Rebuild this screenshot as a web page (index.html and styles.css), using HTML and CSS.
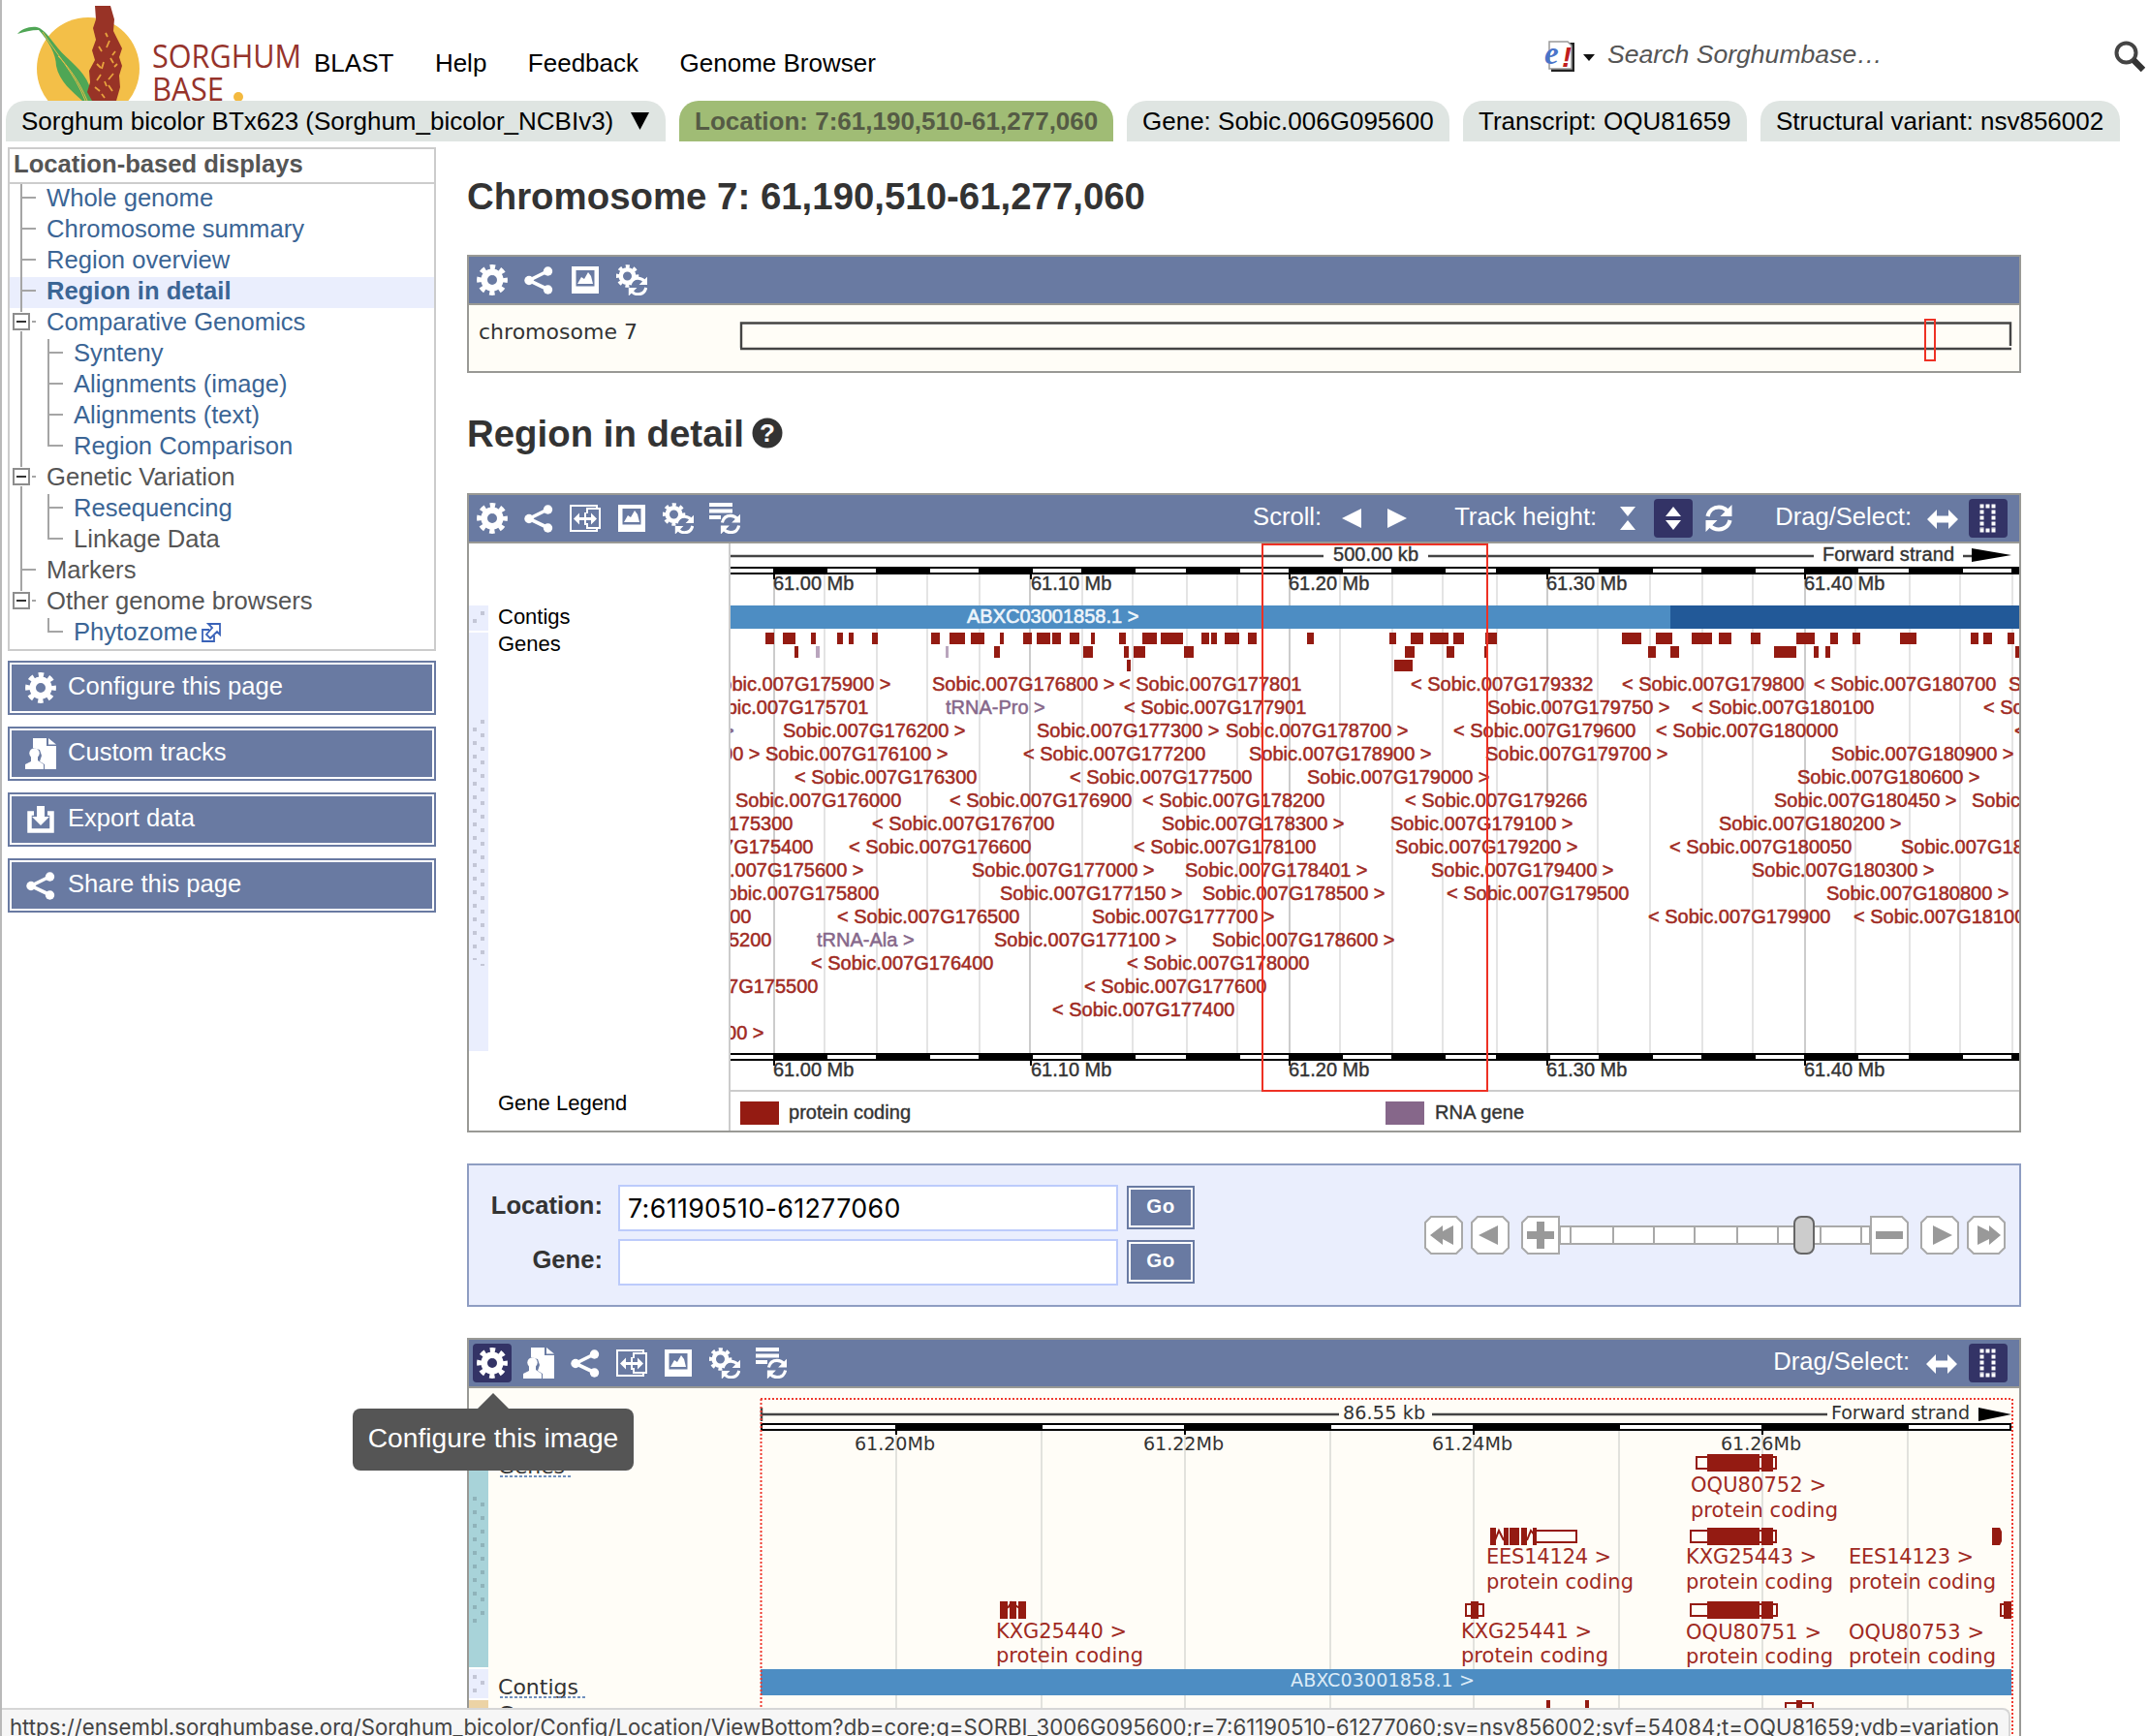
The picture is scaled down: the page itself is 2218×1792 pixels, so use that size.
FILE: index.html
```html
<!DOCTYPE html>
<html lang="en">
<head>
<meta charset="utf-8">
<title>Sorghumbase: Region in detail</title>
<link rel="stylesheet" href="styles.css">
</head>
<body>
<svg class="defs" width="0" height="0">
  <symbol id="gear" viewBox="0 0 32 32"><circle cx="16" cy="16" r="8.3" fill="none" stroke="#fff" stroke-width="6.6"/><circle cx="16" cy="16" r="13.4" fill="none" stroke="#fff" stroke-width="5" stroke-dasharray="5.4 5.125" stroke-dashoffset="2.7"/></symbol>
  <symbol id="share" viewBox="0 0 32 32"><path d="M25 7 6 16.500l19 9" fill="none" stroke="#fff" stroke-width="3.600"/><circle cx="25.500" cy="7" r="4.700" fill="#fff"/><circle cx="6" cy="16.500" r="4.700" fill="#fff"/><circle cx="25.500" cy="26" r="4.700" fill="#fff"/></symbol>
  <symbol id="resize" viewBox="0 0 32 32"><path d="M28 6V3H1v26h27v-3" fill="none" stroke="#fff" stroke-width="2"/><path d="M18 11V6h13v20H18v-5" fill="none" stroke="#fff" stroke-width="2"/><path d="M4 16.500 10 10.500v4.500h12v-4.500l6 6-6 6V18H10v4.500z" fill="#fff"/><path d="M16 10v13" stroke="#fff" stroke-width="2"/></symbol>
  <symbol id="image" viewBox="0 0 32 32"><path d="M2 2h28v28H2zM6.500 6v16.500h19V6z" fill="#fff" fill-rule="evenodd"/><path d="M8 20l4-7 3 2 4-7 3 4 2 8z" fill="#fff"/></symbol>
  <symbol id="cycle" viewBox="0 0 32 32"><path d="M4.500 14C6 7.500 11 4.500 16 4.500c4 0 7 1.500 9.500 4.500M27.500 18C26 24.500 21 27.500 16 27.500c-4 0-7-1.500-9.500-4.500" fill="none" stroke="#fff" stroke-width="4.200"/><path d="M29.500 2v12h-12zM2.500 30V18h12z" fill="#fff"/></symbol>
  <symbol id="gearcycle" viewBox="0 0 32 32"><circle cx="11.500" cy="12" r="6.800" fill="none" stroke="#fff" stroke-width="4.600"/><circle cx="11.500" cy="12" r="10" fill="none" stroke="#fff" stroke-width="3.600" stroke-dasharray="4 3.850" stroke-dashoffset="2"/><circle cx="23" cy="23" r="8" fill="#697aa2"/><use href="#cycle" x="11" y="11" width="23" height="23"/></symbol>
  <symbol id="listcycle" viewBox="0 0 32 32"><path d="M0 2h24M0 8.500h24M0 15h12" stroke="#fff" stroke-width="3.800"/><use href="#cycle" x="10" y="10" width="24" height="24"/></symbol>
  <symbol id="custom" viewBox="0 0 32 32"><path d="M8 0h14v8h10v24H20v-5l-5-3 2-6-2-6-7-2z" fill="#fff"/><path d="M24 0l8 6.500h-8z" fill="#fff"/><circle cx="9.500" cy="15.500" r="5.200" fill="#fff"/><path d="M6 18h7v5l6 4v5H0v-5l6-3z" fill="#fff"/></symbol>
  <symbol id="export" viewBox="0 0 32 32"><path d="M9 9.500H4.500v18h23v-18H23" fill="none" stroke="#fff" stroke-width="4.500"/><path d="M12 2h8v11h5l-9 9-9-9h5z" fill="#fff"/></symbol>
  <symbol id="drag" viewBox="0 0 32 32"><path d="M0 17l10-10v6.500h12V7l10 10-10 10v-6.500H10V27z" fill="#fff"/></symbol>
  <symbol id="select" viewBox="0 0 32 32"><path d="M7.500 3.500h18" stroke="#fff" stroke-width="4" stroke-dasharray="4 2"/><path d="M7.500 28.500h18" stroke="#fff" stroke-width="4" stroke-dasharray="4 2"/><path d="M9.500 7.500v19M21.500 7.500v19" stroke="#fff" stroke-width="4" stroke-dasharray="4 2"/></symbol>
  <symbol id="t-mid" viewBox="0 0 37 32"><path d="M12 0v32M12 14h15" fill="none" stroke="#a5a5a5" stroke-width="2"/></symbol>
  <symbol id="t-box" viewBox="0 0 37 32"><path d="M12 0v4M12 24v8M23 14h4" stroke="#a5a5a5" stroke-width="2"/><path d="M4 6h16v16H4z" fill="#fff" stroke="#8d8d8d" stroke-width="2"/><path d="M7 14h10" stroke="#333" stroke-width="2"/></symbol>
  <symbol id="t-boxend" viewBox="0 0 37 32"><path d="M12 0v4M23 14h4" stroke="#a5a5a5" stroke-width="2"/><path d="M4 6h16v16H4z" fill="#fff" stroke="#8d8d8d" stroke-width="2"/><path d="M7 14h10" stroke="#333" stroke-width="2"/></symbol>
  <symbol id="c-mid" viewBox="0 0 65 32"><path d="M12 0v32M40 0v32M40 14h15" fill="none" stroke="#a5a5a5" stroke-width="2"/></symbol>
  <symbol id="c-end" viewBox="0 0 65 32"><path d="M12 0v32M40 0v14h15" fill="none" stroke="#a5a5a5" stroke-width="2"/></symbol>
  <symbol id="c-last" viewBox="0 0 65 32"><path d="M40 0v14h15" fill="none" stroke="#a5a5a5" stroke-width="2"/></symbol>
</svg>

<div class="page">
  <header class="masthead">
    <svg class="logo" width="324" height="104" viewBox="0 0 324 104">
      <circle cx="91" cy="71" r="53" fill="#f3bf48"/>
      <path d="M18 35c4-5 12-8 20-7 8 2 14 12 22 22 10 12 26 22 32 38l6 16H85C75 95 61 84 58 68c0-12-8-26-18-37-8 0-15 2-22 4z" fill="#4fa655"/>
      <path d="M44 33c12 20 34 44 44 71M60 58c10 10 22 26 30 46" stroke="#e3bd49" stroke-width="1" fill="none"/>
      <path d="M98 6h16l4 14-1 12 5 10 4 8-3 9 3 9-3 10 1 12-4 14H95l-5-9 3-10-1-12 6-11-3-10 4-11-3-12 3-9z" fill="#983326"/>
      <path d="M102 48l3 5M113 42l-3 7M100 66l4 4M114 60l3 5M104 77l-4 6M117 76l-5 6M98 90l5 4M112 88l4 6M107 64l-2 7M119 53l-3 4M105 97l3 4M109 34l2 4M108 84l2 5M121 66l-3 3" stroke="#e8a33d" stroke-width="1.800"/>
      <text class="brand" x="157" y="70" textLength="154" lengthAdjust="spacingAndGlyphs">SORGHUM</text>
      <text class="brand" x="157" y="104" textLength="74" lengthAdjust="spacingAndGlyphs">BASE</text>
      <circle cx="246" cy="100" r="5" fill="#f3b93f"/>
    </svg>
    <nav class="nav"><a>BLAST</a><a>Help</a><a>Feedback</a><a>Genome Browser</a></nav>
    <div class="search">
      <svg width="54" height="32" viewBox="0 0 54 32"><path d="M8 2h24v30H8z" fill="#222"/><path d="M6 1h19l4 4v24H6z" fill="#fff" stroke="#999" stroke-width="1.500"/><text x="1" y="24" class="e-mark">e</text><text x="19" y="27" class="e-bang">!</text><path d="M41 14h12l-6 7z" fill="#111"/></svg>
      <span class="placeholder">Search Sorghumbase…</span>
      <svg width="32" height="32" viewBox="0 0 32 32"><circle cx="12.500" cy="12.500" r="10" fill="none" stroke="#444" stroke-width="4"/><path d="M20 20l10 10" stroke="#333" stroke-width="6.500"/></svg>
    </div>
  </header>

  <div class="tabs">
    <div class="tab species">Sorghum bicolor BTx623 (Sorghum_bicolor_NCBIv3)<svg width="20" height="20" viewBox="0 0 20 20"><path d="M0 1h19L9.500 19z"/></svg></div>
    <div class="tab location active">Location: 7:61,190,510-61,277,060</div>
    <div class="tab gene">Gene: Sobic.006G095600</div>
    <div class="tab transcript">Transcript: OQU81659</div>
    <div class="tab variant">Structural variant: nsv856002</div>
  </div>

  <div class="columns">
    <aside class="sidebar">
      <div class="menu">
        <div class="menu-title">Location-based displays</div>
        <div class="row"><svg class="l1"><use href="#t-mid"/></svg><a>Whole genome</a></div>
        <div class="row"><svg class="l1"><use href="#t-mid"/></svg><a>Chromosome summary</a></div>
        <div class="row"><svg class="l1"><use href="#t-mid"/></svg><a>Region overview</a></div>
        <div class="row current"><svg class="l1"><use href="#t-mid"/></svg><a>Region in detail</a></div>
        <div class="row"><svg class="l1"><use href="#t-box"/></svg><a>Comparative Genomics</a></div>
        <div class="row"><svg class="l2"><use href="#c-mid"/></svg><a>Synteny</a></div>
        <div class="row"><svg class="l2"><use href="#c-mid"/></svg><a>Alignments (image)</a></div>
        <div class="row"><svg class="l2"><use href="#c-mid"/></svg><a>Alignments (text)</a></div>
        <div class="row"><svg class="l2"><use href="#c-end"/></svg><a>Region Comparison</a></div>
        <div class="row"><svg class="l1"><use href="#t-box"/></svg><span>Genetic Variation</span></div>
        <div class="row"><svg class="l2"><use href="#c-mid"/></svg><a>Resequencing</a></div>
        <div class="row"><svg class="l2"><use href="#c-end"/></svg><span>Linkage Data</span></div>
        <div class="row"><svg class="l1"><use href="#t-mid"/></svg><span>Markers</span></div>
        <div class="row"><svg class="l1"><use href="#t-boxend"/></svg><span>Other genome browsers</span></div>
        <div class="row"><svg class="l2"><use href="#c-last"/></svg><a>Phytozome</a><svg class="ext" width="20" height="20" viewBox="0 0 20 20"><path d="M8 7H1v12h12v-6M7 1h12v11l-3-3-7 7-4-4 6-7z" fill="none" stroke="#3a62b8" stroke-width="1.800"/></svg></div>
      </div>
      <div class="tool"><svg><use href="#gear"/></svg>Configure this page</div>
      <div class="tool"><svg><use href="#custom"/></svg>Custom tracks</div>
      <div class="tool"><svg><use href="#export"/></svg>Export data</div>
      <div class="tool"><svg><use href="#share"/></svg>Share this page</div>
    </aside>

    <main class="main">
      <h1>Chromosome 7: 61,190,510-61,277,060</h1>
      <section class="panel">
        <div class="toolbar"><i><svg><use href="#gear"/></svg></i><i><svg><use href="#share"/></svg></i><i><svg><use href="#image"/></svg></i><i><svg><use href="#gearcycle"/></svg></i></div>
        <svg class="plot cream" width="1600" height="68" viewBox="484 315 1600 68">
          <text class="dv" x="494" y="350" textLength="164">chromosome 7</text>
          <path d="M765 359V333.500H2075V357M764 360h1312" fill="none" stroke="#444" stroke-width="2.400"/>
          <path d="M1987 330h10v42h-10z" fill="none" stroke="#ee3124" stroke-width="2"/>
        </svg>
      </section>

      <h2>Region in detail <svg width="32" height="32" viewBox="0 0 32 32"><circle cx="16" cy="16" r="15.500" fill="#333"/><text x="16" y="25" text-anchor="middle">?</text></svg></h2>
      <section class="panel">
        <div class="toolbar"><i><svg><use href="#gear"/></svg></i><i><svg><use href="#share"/></svg></i><i><svg><use href="#resize"/></svg></i><i><svg><use href="#image"/></svg></i><i><svg><use href="#gearcycle"/></svg></i><i><svg><use href="#listcycle"/></svg></i>
          <div class="controls">
            <span class="lbl">Scroll:</span>
            <svg class="scroll-icons" width="68" height="32" viewBox="0 0 68 32"><path d="M20 6v20L0 16zM47 6v20l20-10z" fill="#fff"/></svg>
            <span class="lbl height">Track height:</span>
            <i><svg viewBox="0 0 32 32"><path d="M8 4h16L16 14zM8 28h16L16 18z" fill="#fff"/></svg></i>
            <i class="on"><svg viewBox="0 0 32 32"><path d="M8 14h16L16 4zM8 18h16L16 28z" fill="#fff"/></svg></i>
            <i><svg><use href="#cycle"/></svg></i>
            <span class="lbl drag">Drag/Select:</span>
            <i><svg><use href="#drag"/></svg></i>
            <i class="on"><svg><use href="#select"/></svg></i>
          </div>
        </div>
        <svg class="plot" width="1600" height="606" viewBox="484 561 1600 606">
          <path d="M484 625h20v26h-20zM484 653h20v432h-20z" fill="#eaeefd"/>
          <path d="M496 633h4M488 641h4" stroke="#c3c6d6" stroke-width="4"/>
          <path d="M498 743v254" stroke="#c3c6d6" stroke-width="4" stroke-dasharray="4 10"/>
          <path d="M490 751v240" stroke="#c3c6d6" stroke-width="4" stroke-dasharray="4 10"/>
          <g class="side"><text x="514" y="644">Contigs</text><text x="514" y="672">Genes</text><text x="514" y="1146">Gene Legend</text></g>
          <path d="M753 561v606" stroke="#ccc" stroke-width="2"/>
          <svg x="754" y="561" width="1330" height="606" viewBox="754 561 1330 606">
            <path d="M851 593v494M905 593v494M957 593v494M1011 593v494M1117 593v494M1169 593v494M1225 593v494M1277 593v494M1383 593v494M1437 593v494M1489 593v494M1545 593v494M1649 593v494M1703 593v494M1757 593v494M1809 593v494M1915 593v494M1971 593v494M2023 593v494M2077 593v494" stroke="#e4e4e4" stroke-width="2"/>
            <path d="M799 593v494M1063 593v494M1331 593v494M1597 593v494M1863 593v494" stroke="#ccc" stroke-width="2"/>
            <path d="M754 574h612M1474 574h398M2026 574h10" stroke="#444" stroke-width="2.400"/>
            <path d="M2035 566l41 7-41 7z"/>
            <g id="scale">
              <path d="M754 585h1330v8H754z"/>
              <path d="M754 589h44M854 589h50M960 589h50M1066 589h50M1172 589h52M1280 589h50M1386 589h50M1492 589h52M1600 589h50M1706 589h50M1812 589h50M1918 589h52M2026 589h50" stroke="#fff" stroke-width="4"/>
              <path d="M799 593v5M1064 593v5M1331 593v5M1597 593v5M1863 593v5" stroke="#000" stroke-width="2"/>
              <g class="ax"><text x="798" y="608.500">61.00 Mb</text><text x="1064" y="608.500">61.10 Mb</text><text x="1330" y="608.500">61.20 Mb</text><text x="1596" y="608.500">61.30 Mb</text><text x="1862" y="608.500">61.40 Mb</text></g>
            </g>
            <use href="#scale" y="502"/>
            <g class="ax"><text x="1376" y="579" textLength="88">500.00 kb</text><text x="1881" y="579" textLength="136">Forward strand</text></g>
            <path d="M754 625h970v24H754z" fill="#4d8dc3"/><path d="M1724 625h360v24h-360z" fill="#225998"/>
            <text class="contig" x="998" y="643">ABXC03001858.1 &gt;</text>
            <path fill="#941b12" d="M790 653h9v12h-9zM808 653h13v12h-13zM837 653h5v12h-5zM864 653h6v12h-6zM876 653h5v12h-5zM900 653h6v12h-6zM961 653h9v12h-9zM980 653h16v12h-16zM1002 653h14v12h-14zM1032 653h4v12h-4zM1056 653h9v12h-9zM1070 653h14v12h-14zM1086 653h9v12h-9zM1104 653h10v12h-10zM1126 653h4v12h-4zM1155 653h7v12h-7zM1179 653h15v12h-15zM1198 653h23v12h-23zM1240 653h8v12h-8zM1250 653h6v12h-6zM1264 653h15v12h-15zM1288 653h9v12h-9zM1349 653h7v12h-7zM1434 653h7v12h-7zM1456 653h13v12h-13zM1476 653h19v12h-19zM1500 653h11v12h-11zM1533 653h12v12h-12zM1674 653h20v12h-20zM1709 653h17v12h-17zM1746 653h21v12h-21zM1774 653h13v12h-13zM1807 653h10v12h-10zM1854 653h19v12h-19zM1889 653h8v12h-8zM1912 653h8v12h-8zM1961 653h17v12h-17zM2034 653h8v12h-8zM2047 653h9v12h-9zM2072 653h7v12h-7zM820 667h4v12h-4zM1026 667h6v12h-6zM1118 667h10v12h-10zM1160 667h5v12h-5zM1170 667h12v12h-12zM1222 667h10v12h-10zM1450 667h10v12h-10zM1493 667h8v12h-8zM1532 667h4v12h-4zM1701 667h8v12h-8zM1724 667h9v12h-9zM1831 667h23v12h-23zM1872 667h5v12h-5zM1884 667h5v12h-5zM2080 667h4v12h-4zM1163 681h4v12h-4zM1439 681h19v12h-19z"/>
            <path fill="#b9a5bd" d="M842 667h4v12h-4zM976 667h3v12h-3z"/>
            <g class="genes">
              <text x="731" y="713">Sobic.007G175900 &gt;</text><text x="962" y="713">Sobic.007G176800 &gt;</text><text x="1155" y="713">&lt; Sobic.007G177801</text><text x="1456" y="713">&lt; Sobic.007G179332</text><text x="1674" y="713">&lt; Sobic.007G179800</text><text x="1872" y="713">&lt; Sobic.007G180700</text><text x="2073" y="713">Sobic.007G181300 &gt;</text>
              <text x="708" y="737">&lt; Sobic.007G175701</text><text class="rna" x="976" y="737">tRNA-Pro &gt;</text><text x="1160" y="737">&lt; Sobic.007G177901</text><text x="1535" y="737">Sobic.007G179750 &gt;</text><text x="1746" y="737">&lt; Sobic.007G180100</text><text x="2047" y="737">&lt; Sobic.007G181201</text>
              <text class="rna" x="746" y="761">&gt;</text><text x="808" y="761">Sobic.007G176200 &gt;</text><text x="1070" y="761">Sobic.007G177300 &gt;</text><text x="1265" y="761">Sobic.007G178700 &gt;</text><text x="1500" y="761">&lt; Sobic.007G179600</text><text x="1709" y="761">&lt; Sobic.007G180000</text><text x="2079" y="761">&lt;</text>
              <text x="596" y="785">Sobic.007G175100 &gt;</text><text x="790" y="785">Sobic.007G176100 &gt;</text><text x="1056" y="785">&lt; Sobic.007G177200</text><text x="1289" y="785">Sobic.007G178900 &gt;</text><text x="1533" y="785">Sobic.007G179700 &gt;</text><text x="1890" y="785">Sobic.007G180900 &gt;</text>
              <text x="820" y="809">&lt; Sobic.007G176300</text><text x="1104" y="809">&lt; Sobic.007G177500</text><text x="1349" y="809">Sobic.007G179000 &gt;</text><text x="1855" y="809">Sobic.007G180600 &gt;</text>
              <text x="759" y="833">Sobic.007G176000</text><text x="980" y="833">&lt; Sobic.007G176900</text><text x="1179" y="833">&lt; Sobic.007G178200</text><text x="1450" y="833">&lt; Sobic.007G179266</text><text x="1831" y="833">Sobic.007G180450 &gt;</text><text x="2035" y="833">Sobic.007G181100 &gt;</text>
              <text x="630" y="857">&lt; Sobic.007G175300</text><text x="900" y="857">&lt; Sobic.007G176700</text><text x="1199" y="857">Sobic.007G178300 &gt;</text><text x="1435" y="857">Sobic.007G179100 &gt;</text><text x="1774" y="857">Sobic.007G180200 &gt;</text>
              <text x="651" y="881">&lt; Sobic.007G175400</text><text x="876" y="881">&lt; Sobic.007G176600</text><text x="1170" y="881">&lt; Sobic.007G178100</text><text x="1440" y="881">Sobic.007G179200 &gt;</text><text x="1723" y="881">&lt; Sobic.007G180050</text><text x="1962" y="881">Sobic.007G181200 &gt;</text>
              <text x="703" y="905">Sobic.007G175600 &gt;</text><text x="1003" y="905">Sobic.007G177000 &gt;</text><text x="1223" y="905">Sobic.007G178401 &gt;</text><text x="1477" y="905">Sobic.007G179400 &gt;</text><text x="1808" y="905">Sobic.007G180300 &gt;</text>
              <text x="719" y="929">&lt; Sobic.007G175800</text><text x="1032" y="929">Sobic.007G177150 &gt;</text><text x="1241" y="929">Sobic.007G178500 &gt;</text><text x="1493" y="929">&lt; Sobic.007G179500</text><text x="1885" y="929">Sobic.007G180800 &gt;</text>
              <text x="587" y="953">&lt; Sobic.007G175000</text><text x="864" y="953">&lt; Sobic.007G176500</text><text x="1127" y="953">Sobic.007G177700 &gt;</text><text x="1701" y="953">&lt; Sobic.007G179900</text><text x="1913" y="953">&lt; Sobic.007G181000</text>
              <text x="608" y="977">&lt; Sobic.007G175200</text><text class="rna" x="843" y="977">tRNA-Ala &gt;</text><text x="1026" y="977">Sobic.007G177100 &gt;</text><text x="1251" y="977">Sobic.007G178600 &gt;</text>
              <text x="837" y="1001">&lt; Sobic.007G176400</text><text x="1163" y="1001">&lt; Sobic.007G178000</text>
              <text x="656" y="1025">&lt; Sobic.007G175500</text><text x="1119" y="1025">&lt; Sobic.007G177600</text>
              <text x="1086" y="1049">&lt; Sobic.007G177400</text>
              <text x="600" y="1073">Sobic.007G175000 &gt;</text>
            </g>
            <path d="M754 1126h1330" stroke="#ccc" stroke-width="2"/>
            <path d="M764 1137h40v24h-40z" fill="#941b12"/><path d="M1430 1137h40v24h-40z" fill="#86678a"/>
            <g class="ax"><text x="814" y="1155" textLength="126">protein coding</text><text x="1481" y="1155" textLength="92">RNA gene</text></g>
            <path d="M1303 562h232v564h-232z" fill="none" stroke="#ee3124" stroke-width="2"/>
          </svg>
        </svg>
      </section>

      <section class="navform">
        <div class="fields">
          <label>Location:</label><div class="input">7:61190510-61277060</div><div class="go">Go</div>
          <label>Gene:</label><div class="input"></div><div class="go">Go</div>
        </div>
        <svg class="slider" width="600" height="40" viewBox="1470 1255 600 40">
          <g fill="#fff" stroke="#a9a9a9" stroke-width="2">
            <path d="M1610 1266h320v18h-320z"/>
            <path d="M1477 1256h26l6 6v26l-6 6h-26l-6-6v-26zM1525 1256h26l6 6v26l-6 6h-26l-6-6v-26zM1577 1256h32v38h-32l-6-6v-26zM1931 1256h32l6 6v26l-6 6h-32zM1989 1256h26l6 6v26l-6 6h-26l-6-6v-26zM2037 1256h26l6 6v26l-6 6h-26l-6-6v-26z"/>
            <path d="M1621 1266v18M1665 1266v18M1707 1266v18M1749 1266v18M1793 1266v18M1835 1266v18M1879 1266v18M1921 1266v18"/>
          </g>
          <path fill="#999" d="M1476 1275l13-10v6l11-6v20l-11-6v6zM1526 1275l20-10v20zM1586 1261h8v10h10v8h-10v10h-8v-10h-10v-8h10zM1936 1271h28v8h-28zM1995 1265v20l20-10zM2065 1275l-12-10v6l-12-6v20l12-6v6z"/>
          <rect x="1852" y="1256" width="20" height="38" rx="7" fill="#ccc" stroke="#666" stroke-width="2"/>
        </svg>
      </section>

      <section class="panel last">
        <div class="toolbar"><i class="on"><svg><use href="#gear"/></svg></i><i><svg><use href="#custom"/></svg></i><i><svg><use href="#share"/></svg></i><i><svg><use href="#resize"/></svg></i><i><svg><use href="#image"/></svg></i><i><svg><use href="#gearcycle"/></svg></i><i><svg><use href="#listcycle"/></svg></i>
          <div class="controls"><span class="lbl drag">Drag/Select:</span><i><svg><use href="#drag"/></svg></i><i class="on"><svg><use href="#select"/></svg></i></div>
        </div>
        <svg class="plot cream" width="1600" height="359" viewBox="484 1433 1600 359">
          <path d="M484 1502h20v219h-20z" fill="#a8d3d9"/><path d="M484 1721h20v2h-20zM484 1753h20v2h-20z" fill="#fff"/><path d="M484 1723h20v30h-20z" fill="#eaeefd"/><path d="M484 1755h20v37h-20z" fill="#ecd3a5"/>
          <path d="M490 1545v132" stroke="#8fb3ba" stroke-width="4" stroke-dasharray="4 10"/><path d="M498 1551v126" stroke="#8fb3ba" stroke-width="4" stroke-dasharray="4 10"/>
          <path d="M488 1731h4M496 1737h4M488 1745h4" stroke="#c3c6d6" stroke-width="4"/>
          <g class="dv"><text x="514" y="1521" textLength="69">Genes</text><text x="514" y="1749" textLength="83">Contigs</text><text x="514" y="1777" textLength="69">Genes</text></g>
          <path d="M516 1524h74M516 1752h88" stroke="#6f8fbd" stroke-width="2" stroke-dasharray="3 2"/>
          <path d="M925 1477v315M1075 1477v315M1223 1477v315M1373 1477v315M1521 1477v315M1671 1477v315M1819 1477v315M1969 1477v315" stroke="#e2e2dd" stroke-width="2"/>
          <path d="M785 1460h597M1478 1460h408M786 1453v14" stroke="#444" stroke-width="2.400"/>
          <path d="M2042 1453l34 7-34 7z"/>
          <path d="M785 1469h1291v8H785z"/>
          <path d="M787 1473h137M1076 1473h146M1374 1473h146M1672 1473h146M1970 1473h104" stroke="#fff" stroke-width="4"/>
          <path d="M925 1477v4M1223 1477v4M1521 1477v4M1819 1477v4" stroke="#000" stroke-width="2"/>
          <g class="dv sm"><text x="1386" y="1465" textLength="85">86.55 kb</text><text x="1890" y="1465" textLength="143">Forward strand</text><text x="882" y="1497" textLength="83">61.20Mb</text><text x="1180" y="1497" textLength="83">61.22Mb</text><text x="1478" y="1497" textLength="83">61.24Mb</text><text x="1776" y="1497" textLength="83">61.26Mb</text></g>
          <path d="M785 1723h1291v27H785z" fill="#4d8dc3"/><text class="dv sm pale" x="1332" y="1741" textLength="190">ABXC03001858.1 &gt;</text>
          <g fill="#fffdf7" stroke="#941b12" stroke-width="2">
            <path d="M1751 1504h82v12h-82zM1745 1580h88v12h-88zM1745 1656h89v12h-89zM1585 1580h42v12h-42zM1513 1656h18v12h-18zM2065 1656h8v12h-8zM1843 1758h28v12h-28z"/>
          </g>
          <path fill="#941b12" d="M1762 1501h54v18h-54zM1818 1501h12v18h-12zM1762 1577h54v18h-54zM1818 1577h12v18h-12zM1762 1653h54v18h-54zM1818 1653h12v18h-12zM1538 1577h6v18h-6zM1552 1577h5v18h-5zM1558 1577h10v18h-10zM1570 1577h6v18h-6zM1582 1577h4v18h-4zM2056 1577h8l2 4v10l-2 4h-8zM1032 1653h8v18h-8zM1042 1653h7v18h-7zM1051 1653h8v18h-8zM1518 1653h8v18h-8zM2068 1653h8v18h-8zM1596 1755h4v20h-4zM1636 1755h4v20h-4zM1854 1755h6v20h-6z"/>
          <path d="M1543 1590l4-10 5 10M1576 1590l4-10 4 5M1040 1660l4-6 8 6M1052 1655h4" fill="none" stroke="#941b12" stroke-width="2"/>
          <g class="dv tr">
            <text x="1745" y="1540" textLength="140">OQU80752 &gt;</text><text x="1745" y="1566" textLength="152">protein coding</text>
            <text x="1534" y="1614" textLength="129">EES14124 &gt;</text><text x="1534" y="1640" textLength="152">protein coding</text>
            <text x="1740" y="1614" textLength="135">KXG25443 &gt;</text><text x="1740" y="1640" textLength="152">protein coding</text>
            <text x="1908" y="1614" textLength="129">EES14123 &gt;</text><text x="1908" y="1640" textLength="152">protein coding</text>
            <text x="1028" y="1691" textLength="135">KXG25440 &gt;</text><text x="1028" y="1716" textLength="152">protein coding</text>
            <text x="1508" y="1691" textLength="135">KXG25441 &gt;</text><text x="1508" y="1716" textLength="152">protein coding</text>
            <text x="1740" y="1692" textLength="140">OQU80751 &gt;</text><text x="1740" y="1717" textLength="152">protein coding</text>
            <text x="1908" y="1692" textLength="140">OQU80753 &gt;</text><text x="1908" y="1717" textLength="152">protein coding</text>
          </g>
          <path d="M785 1444h1292M785.500 1444v348M2077 1444v348" fill="none" stroke="#ee3b30" stroke-width="2" stroke-dasharray="2 2"/>
        </svg>
        <div class="tooltip">Configure this image</div>
      </section>
    </main>
  </div>
  <div class="status">https://ensembl.sorghumbase.org/Sorghum_bicolor/Config/Location/ViewBottom?db=core;g=SORBI_3006G095600;r=7:61190510-61277060;sv=nsv856002;svf=54084;t=OQU81659;vdb=variation</div>
</div>
</body>
</html>
```
FILE: styles.css
```css
* { box-sizing: border-box; }
html, body { margin: 0; }
body { font: 25.6px "Liberation Sans", Arial, sans-serif; color: #333; background: #fff; }
.defs { position: absolute; }
.page { position: relative; width: 2218px; height: 1792px; overflow: hidden; border-left: 2px solid #b9b9b9; }
svg { display: block; flex: none; }

.masthead { display: flex; height: 104px; margin-left: -2px; }
.brand { font: 400 32px "Open Sans", sans-serif; fill: #96332b; }
.nav { display: flex; gap: 42.5px; padding-top: 30px; color: #000; font-size: 26px; }
.nav a { white-space: nowrap; line-height: 70px; }
.search { display: flex; margin-left: auto; padding: 42px 4px 0 0; width: 625px; }
.placeholder { font-size: 26.6px; font-style: italic; color: #555; line-height: 28px; margin: 0 auto 0 12px; }
.e-mark { font: italic bold 33px "Liberation Serif", serif; fill: #4a74c9; }
.e-bang { font: italic bold 30px "Liberation Sans", sans-serif; fill: #c01d1d; }

.tabs { display: flex; gap: 14px; height: 42px; margin-left: 4px; font-size: 26px; }
.tab { height: 42px; line-height: 42px; padding-left: 16px; border-radius: 20px 20px 0 0; background: #dfe5e2; color: #000; white-space: nowrap; }
.species { width: 681px; display: flex; align-items: center; gap: 18px; }
.location { width: 448px; }
.gene { width: 333px; }
.transcript { width: 293px; }
.variant { width: 371px; }
.active { background: #a0bc75; color: #555b45; font-weight: bold; }

.columns { display: flex; margin-left: 6px; gap: 32px; }
.sidebar { width: 442px; padding-top: 6px; display: flex; flex-direction: column; gap: 12px; }
.menu { border: 2px solid #ccc; height: 520px; margin-bottom: -2px; }
.menu-title { height: 36px; line-height: 30px; padding-left: 4px; font-weight: bold; color: #555; border-bottom: 2px solid #ccc; }
.row { display: flex; height: 32px; line-height: 29px; color: #555; white-space: nowrap; }
.row a { color: #3b6595; }
.current { background: #eaeefd; font-weight: bold; }
.l1 { width: 37px; height: 32px; margin-right: 1px; }
.l2 { width: 65px; height: 32px; margin-right: 1px; }
.ext { margin: 5px 0 0 4px; }
.tool { display: flex; height: 56px; border: 2px solid #697aa2; padding: 2px 2px 2px 16px; background: #697aa2; box-shadow: inset 0 0 0 2px #fff; color: #fff; line-height: 45px; gap: 12px; }
.tool svg { width: 32px; height: 32px; margin-top: 8px; }

.main { width: 1604px; }
h1, h2 { margin: 0; font-size: 38.4px; line-height: 44px; color: #333; font-weight: bold; white-space: nowrap; }
h1 { padding: 35px 0 38px; }
h2 { display: flex; gap: 8px; padding: 41px 0 39px; }
h2 svg { margin-top: 5px; }
h2 text { font: bold 26px "Liberation Sans", sans-serif; fill: #fff; }
.panel { position: relative; border: 2px solid #999995; }
.toolbar { display: flex; align-items: center; gap: 8px; height: 50px; padding: 0 12px 0 4px; background: #697aa2; border-bottom: 2px solid #999995; }
.toolbar i { display: flex; width: 40px; height: 40px; padding: 4px; border-radius: 4px; }
.toolbar i svg { width: 32px; height: 32px; }
.toolbar .on { background: #333366; }
.controls { display: flex; align-items: center; margin-left: auto; color: #fff; line-height: 48px; }
.controls .on + i, .controls i + .on { margin-left: 7px; }
.lbl { padding-bottom: 4px; white-space: nowrap; }
.scroll-icons { margin: 0 48px 0 21px; }
.height { margin-right: 12px; }
.drag { margin: 0 12px 0 38px; }
.plot { background: #fff; overflow: hidden; }
.cream { background: #fffdf7; }
.side { font: 22px "Liberation Sans", sans-serif; fill: #000; }
.ax { font: 20px "Liberation Sans", sans-serif; fill: #333; stroke: #333; stroke-width: .4; }
.contig { font: 20px "Liberation Sans", sans-serif; fill: #eef5fb; stroke: #eef5fb; stroke-width: .6; }
.genes { font: 20px "Liberation Sans", sans-serif; fill: #a02a22; stroke: #a02a22; stroke-width: .5; }
.rna { fill: #86678a; stroke: #86678a; }
.dv { font: 22px "DejaVu Sans", sans-serif; fill: #333; }
.dv.sm { font-size: 19.1px; }
.dv.tr { font-size: 21px; fill: #a02a22; }
.dv.pale { fill: #dcebf7; }

.navform { display: flex; margin: 32px 0; height: 148px; border: 2px solid #8e9dc2; background: #eaeefd; padding: 20px 14px 0 0; }
.fields { display: grid; grid-template-columns: 138px 516px 70px; grid-auto-rows: 48px; gap: 8px 9px; align-content: start; }
.fields label { font-weight: bold; text-align: right; line-height: 42px; }
.input { border: 2px solid #bccbfb; background: #fff; height: 48px; margin: 0 -7px 0 7px; padding-left: 8px; font: 26.8px/45px Inter, sans-serif; letter-spacing: .35px; color: #000; }
.go { height: 45px; margin: 1px -7px 0 7px; border: 2px solid #697aa2; background: #697aa2; box-shadow: inset 0 0 0 2px #fff; color: #fff; font: bold 20.5px/36px "Liberation Sans", sans-serif; text-align: center; letter-spacing: .5px; padding-top: 1px; }
.slider { margin: 32px 0 0 auto; }

.last { height: 411px; border-bottom: 0; }
.last .drag { margin-right: 14px; }
.last .controls i:not(.on) { margin-left: -1px; margin-right: 1px; }
.tooltip { position: absolute; left: -120px; top: 71px; width: 290px; height: 64px; border-radius: 8px; background: #555; color: #fff; font-size: 28.2px; line-height: 60px; text-align: center; white-space: nowrap; }
.tooltip::before { content: ""; position: absolute; left: 129px; top: -16px; border: 16px solid transparent; border-top: 0; border-bottom-color: #555; }

.status { position: absolute; left: -2px; top: 1763px; width: 2075px; height: 40px; border-top: 2px solid #d6d6d6; border-right: 2px solid #d6d6d6; border-radius: 0 8px 0 0; background: #f6f6f6; padding-left: 10px; font: 22.2px/36px Inter, sans-serif; color: #444; white-space: nowrap; }
```
